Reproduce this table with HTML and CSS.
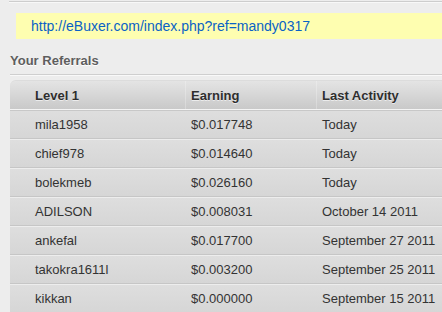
FILE: index.html
```html
<!DOCTYPE html>
<html>
<head>
<meta charset="utf-8">
<link rel="stylesheet" href="styles.css">
</head>
<body>
<div class="page">
  <div class="top-rule"></div>
  <div class="ref-link"><a href="#">http://eBuxer.com/index.php?ref=mandy0317</a></div>
  <h2 class="section-title">Your Referrals</h2>
  <table class="ref-table">
    <thead>
      <tr><th class="c1">Level 1</th><th class="c2">Earning</th><th class="c3">Last Activity</th></tr>
    </thead>
    <tbody>
      <tr><td class="c1">mila1958</td><td class="c2">$0.017748</td><td class="c3">Today</td></tr>
      <tr><td class="c1">chief978</td><td class="c2">$0.014640</td><td class="c3">Today</td></tr>
      <tr><td class="c1">bolekmeb</td><td class="c2">$0.026160</td><td class="c3">Today</td></tr>
      <tr><td class="c1">ADILSON</td><td class="c2">$0.008031</td><td class="c3">October 14 2011</td></tr>
      <tr><td class="c1">ankefal</td><td class="c2">$0.017700</td><td class="c3">September 27 2011</td></tr>
      <tr><td class="c1">takokra1611l</td><td class="c2">$0.003200</td><td class="c3">September 25 2011</td></tr>
      <tr><td class="c1">kikkan</td><td class="c2">$0.000000</td><td class="c3">September 15 2011</td></tr>
    </tbody>
  </table>
</div>
</body>
</html>
```
FILE: styles.css
```css
html, body {
  margin: 0;
  padding: 0;
  background: #ededed;
  overflow: hidden;
}
.page {
  width: 480px;
  font-family: "Liberation Sans", Arial, sans-serif;
  padding-top: 1px;
}
.top-rule {
  margin-left: 9px;
  height: 0;
  border-top: 1px solid #cdcdcd;
  border-bottom: 1px solid #f8f8f8;
}
.ref-link {
  margin: 10px 0 0 16px;
  height: 26px;
  background: #fefeb0;
  padding-left: 15px;
  font-size: 14px;
  line-height: 26px;
}
.ref-link a {
  color: #0a62c6;
  text-decoration: none;
}
.section-title {
  margin: 13px 0 0 10px;
  padding-bottom: 4px;
  font-size: 13px;
  line-height: 18px;
  font-weight: bold;
  color: #5e5e5e;
  text-shadow: 0 1px 0 #ffffff;
  border-bottom: 1px solid #cfcfcf;
  box-shadow: 0 1px 0 #f9f9f9;
}
.ref-table {
  margin: 5px 0 0 10px;
  border-collapse: separate;
  border-spacing: 0;
  width: 470px;
  font-size: 13px;
  color: #333333;
}
.ref-table th, .ref-table td {
  text-align: left;
  height: 27px;
  padding: 0;
  vertical-align: middle;
}
.ref-table th {
  height: 28px;
  font-weight: bold;
  color: #2e2e2e;
  text-shadow: 0 1px 0 rgba(255,255,255,0.6);
  background: linear-gradient(#e4e4e4, #c9c9c9);
  border-top: 1px solid #dcdcdc;
  border-bottom: 1px solid #f4f4f4;
}
.ref-table th.c1 { border-top-left-radius: 6px; }
.ref-table th.c2, .ref-table th.c3 {
  box-shadow: inset 1px 0 0 rgba(255,255,255,0.25);
}
.ref-table td {
  background: linear-gradient(#dedede, #d6d6d6);
  border-top: 1px solid #ededed;
  border-bottom: 1px solid #c6c6c6;
}
.ref-table tbody tr:first-child td { border-top-color: #c8c8c8; }
.c1 { width: 150px; padding-left: 25px !important; }
.c2 { width: 125px; padding-left: 6px !important; }
.c3 { padding-left: 6px !important; }
```
